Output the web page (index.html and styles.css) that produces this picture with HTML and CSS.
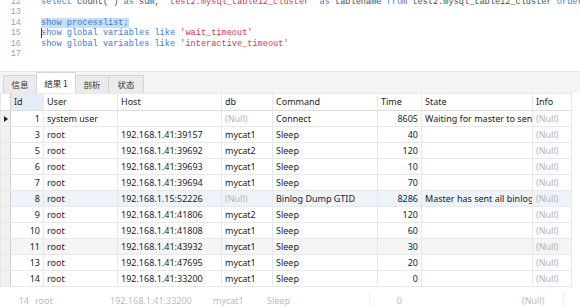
FILE: index.html
```html
<!DOCTYPE html>
<html lang="zh">
<head>
    <meta charset="UTF-8">
    <title>Navicat 查询结果</title>
    <link rel="stylesheet" href="styles.css">
</head>
<body>
    <div class="editor">
        <div class="line"><span class="ln">12</span><span class="code"><span class="kw">select</span> count(*) <span class="kw">as</span> sum, <span class="str">'test2.mysql_table12_cluster'</span> <span class="kw">as</span> tablename <span class="kw">from</span> test2.mysql_table12_cluster <span class="kw">order</span></span></div>
        <div class="line"><span class="ln">13</span><span class="code"></span></div>
        <div class="line"><span class="ln">14</span><span class="code"><span class="kw sel">show processlist;</span></span></div>
        <div class="line"><span class="ln">15</span><span class="code"><span class="cursor"></span><span class="kw">show global variables like</span> <span class="str">'wait_timeout'</span></span></div>
        <div class="line"><span class="ln">16</span><span class="code"><span class="kw">show global variables like</span> <span class="str">'interactive_timeout'</span></span></div>
        <div class="line"><span class="ln">17</span><span class="code"></span></div>
    </div>

    <div class="tabs">
        <div class="tab t1">信息</div>
        <div class="tab t2 active">结果 1</div>
        <div class="tab t3">剖析</div>
        <div class="tab t4">状态</div>
    </div>

    <table class="grid">
        <colgroup>
            <col class="c-mark"><col class="c-id"><col class="c-user"><col class="c-host"><col class="c-db">
            <col class="c-cmd"><col class="c-time"><col class="c-state"><col class="c-info">
        </colgroup>
        <tr class="head">
            <th class="mark"></th><th class="sorted">Id</th><th>User</th><th>Host</th><th>db</th><th>Command</th><th>Time</th><th>State</th><th>Info</th>
        </tr>
        <tr>
            <td class="mark"><span class="arrow"></span></td><td class="num">1</td><td>system user</td><td></td><td class="null">(Null)</td><td>Connect</td><td class="num">8605</td><td>Waiting for master to sen</td><td class="null">(Null)</td>
        </tr>
        <tr>
            <td class="mark"></td><td class="num">3</td><td>root</td><td>192.168.1.41:39157</td><td>mycat1</td><td>Sleep</td><td class="num">40</td><td></td><td class="null">(Null)</td>
        </tr>
        <tr>
            <td class="mark"></td><td class="num">5</td><td>root</td><td>192.168.1.41:39692</td><td>mycat2</td><td>Sleep</td><td class="num">120</td><td></td><td class="null">(Null)</td>
        </tr>
        <tr>
            <td class="mark"></td><td class="num">6</td><td>root</td><td>192.168.1.41:39693</td><td>mycat1</td><td>Sleep</td><td class="num">10</td><td></td><td class="null">(Null)</td>
        </tr>
        <tr>
            <td class="mark"></td><td class="num">7</td><td>root</td><td>192.168.1.41:39694</td><td>mycat1</td><td>Sleep</td><td class="num">70</td><td></td><td class="null">(Null)</td>
        </tr>
        <tr class="hl">
            <td class="mark"></td><td class="num">8</td><td>root</td><td>192.168.1.15:52226</td><td class="null">(Null)</td><td>Binlog Dump GTID</td><td class="num">8286</td><td>Master has sent all binlog</td><td class="null">(Null)</td>
        </tr>
        <tr>
            <td class="mark"></td><td class="num">9</td><td>root</td><td>192.168.1.41:41806</td><td>mycat2</td><td>Sleep</td><td class="num">120</td><td></td><td class="null">(Null)</td>
        </tr>
        <tr>
            <td class="mark"></td><td class="num">10</td><td>root</td><td>192.168.1.41:41808</td><td>mycat1</td><td>Sleep</td><td class="num">60</td><td></td><td class="null">(Null)</td>
        </tr>
        <tr class="alt">
            <td class="mark"></td><td class="num">11</td><td>root</td><td>192.168.1.41:43932</td><td>mycat1</td><td>Sleep</td><td class="num">30</td><td></td><td class="null">(Null)</td>
        </tr>
        <tr>
            <td class="mark"></td><td class="num">13</td><td>root</td><td>192.168.1.41:47695</td><td>mycat1</td><td>Sleep</td><td class="num">20</td><td></td><td class="null">(Null)</td>
        </tr>
        <tr>
            <td class="mark"></td><td class="num">14</td><td>root</td><td>192.168.1.41:33200</td><td>mycat1</td><td>Sleep</td><td class="num">0</td><td></td><td class="null">(Null)</td>
        </tr>
    </table>

    <table class="ghost">
        <colgroup>
            <col class="g-id"><col class="g-user"><col class="g-host"><col class="g-db">
            <col class="g-cmd"><col class="g-time"><col class="g-state"><col class="g-info">
        </colgroup>
        <tr>
            <td class="num">14</td><td>root</td><td>192.168.1.41:33200</td><td>mycat1</td><td class="edge">Sleep</td><td class="num">0</td><td></td><td class="edge">(Null)</td>
        </tr>
    </table>
</body>
</html>
```

FILE: styles.css
```css
body {
    margin: 0;
    width: 580px;
    height: 307px;
    overflow: hidden;
    background-color: #fff;
    font-family: "Noto Sans", "Noto Sans CJK SC", sans-serif;
    font-size: 9px;
    color: #222;
}

/* sql editor */
.editor {
    height: 71px;
    overflow: hidden;
    border-bottom: 1px solid #e8e8e8;
    font-family: "Liberation Mono", monospace;
    font-size: 8.6px;
}

.line {
    display: flex;
    height: 10.4px;
    line-height: 10.4px;
    white-space: pre;
}

.line:first-child {
    margin-top: -3px;
}

.ln {
    flex: none;
    width: 21px;
    text-align: right;
    color: #a3a3a3;
}

.code {
    padding-left: 20px;
    color: #4a4a4a;
}

.kw {
    color: #3d7bd0;
}

.str {
    color: #d8344f;
}

.sel {
    background-color: #c9dff5;
}

.cursor {
    display: inline-block;
    width: 1px;
    height: 10px;
    margin-right: -1px;
    vertical-align: top;
    background-color: #333;
}

/* result tabs */
.tabs {
    display: flex;
    align-items: flex-end;
    height: 21px;
    padding-left: 3px;
    background-color: #f4f4f4;
}

.tab {
    box-sizing: border-box;
    height: 18px;
    line-height: 17px;
    margin-right: -1px;
    border: 1px solid #d6d6d6;
    border-bottom: none;
    background-color: #ebebeb;
    font-family: "Noto Sans CJK SC", sans-serif;
    font-size: 8.5px;
    color: #333;
    text-align: center;
}

.t1 { width: 34px; }
.t2 { width: 40px; }
.t3 { width: 34px; }
.t4 { width: 36px; }

.tab.active {
    height: 21px;
    line-height: 20px;
    background-color: #fff;
}

/* data grid */
.grid {
    border-collapse: collapse;
    table-layout: fixed;
    width: 571px;
}

.c-mark { width: 10px; }
.c-id { width: 33px; }
.c-user { width: 74px; }
.c-host { width: 104px; }
.c-db { width: 51px; }
.c-cmd { width: 105px; }
.c-time { width: 44px; }
.c-state { width: 111px; }
.c-info { width: 39px; }

.grid tr {
    height: 16px;
}

.grid .head {
    height: 17px;
}

.grid th,
.grid td {
    padding: 0 3px;
    border: 1px solid #e8e8e8;
    line-height: 14px;
    white-space: nowrap;
    overflow: hidden;
    font-weight: normal;
    text-align: left;
}

.grid .head th {
    background-color: #fff;
    border-bottom-color: #dcdcdc;
}

.grid .head th.sorted {
    background-color: #e4edf7;
}

.grid .alt td {
    background-color: #f5f5f5;
}

.grid .hl td {
    background-color: #eef3fa;
}

.grid .mark,
.grid .alt .mark,
.grid .hl .mark {
    padding: 0;
    background-color: #f1f1f1;
    border-right-color: #cfcfcf;
}

.arrow {
    display: block;
    width: 0;
    height: 0;
    margin-left: 3px;
    border-left: 4px solid #222;
    border-top: 3.5px solid transparent;
    border-bottom: 3.5px solid transparent;
}

.grid .num,
.ghost .num {
    text-align: right;
}

.null {
    color: #b3b3b3;
}

/* faded copy of the last row */
.ghost {
    margin-top: 5px;
    border-collapse: collapse;
    table-layout: fixed;
    width: 563px;
    color: #bcbcbc;
}

.g-id { width: 32px; }
.g-user { width: 75px; }
.g-host { width: 103px; }
.g-db { width: 54px; }
.g-cmd { width: 105px; }
.g-time { width: 36px; }
.g-state { width: 114px; }
.g-info { width: 44px; }

.ghost td {
    height: 16px;
    padding: 0 3px;
    white-space: nowrap;
    overflow: hidden;
}

.ghost .edge {
    border-right: 1px solid #f0f0f0;
}
```
